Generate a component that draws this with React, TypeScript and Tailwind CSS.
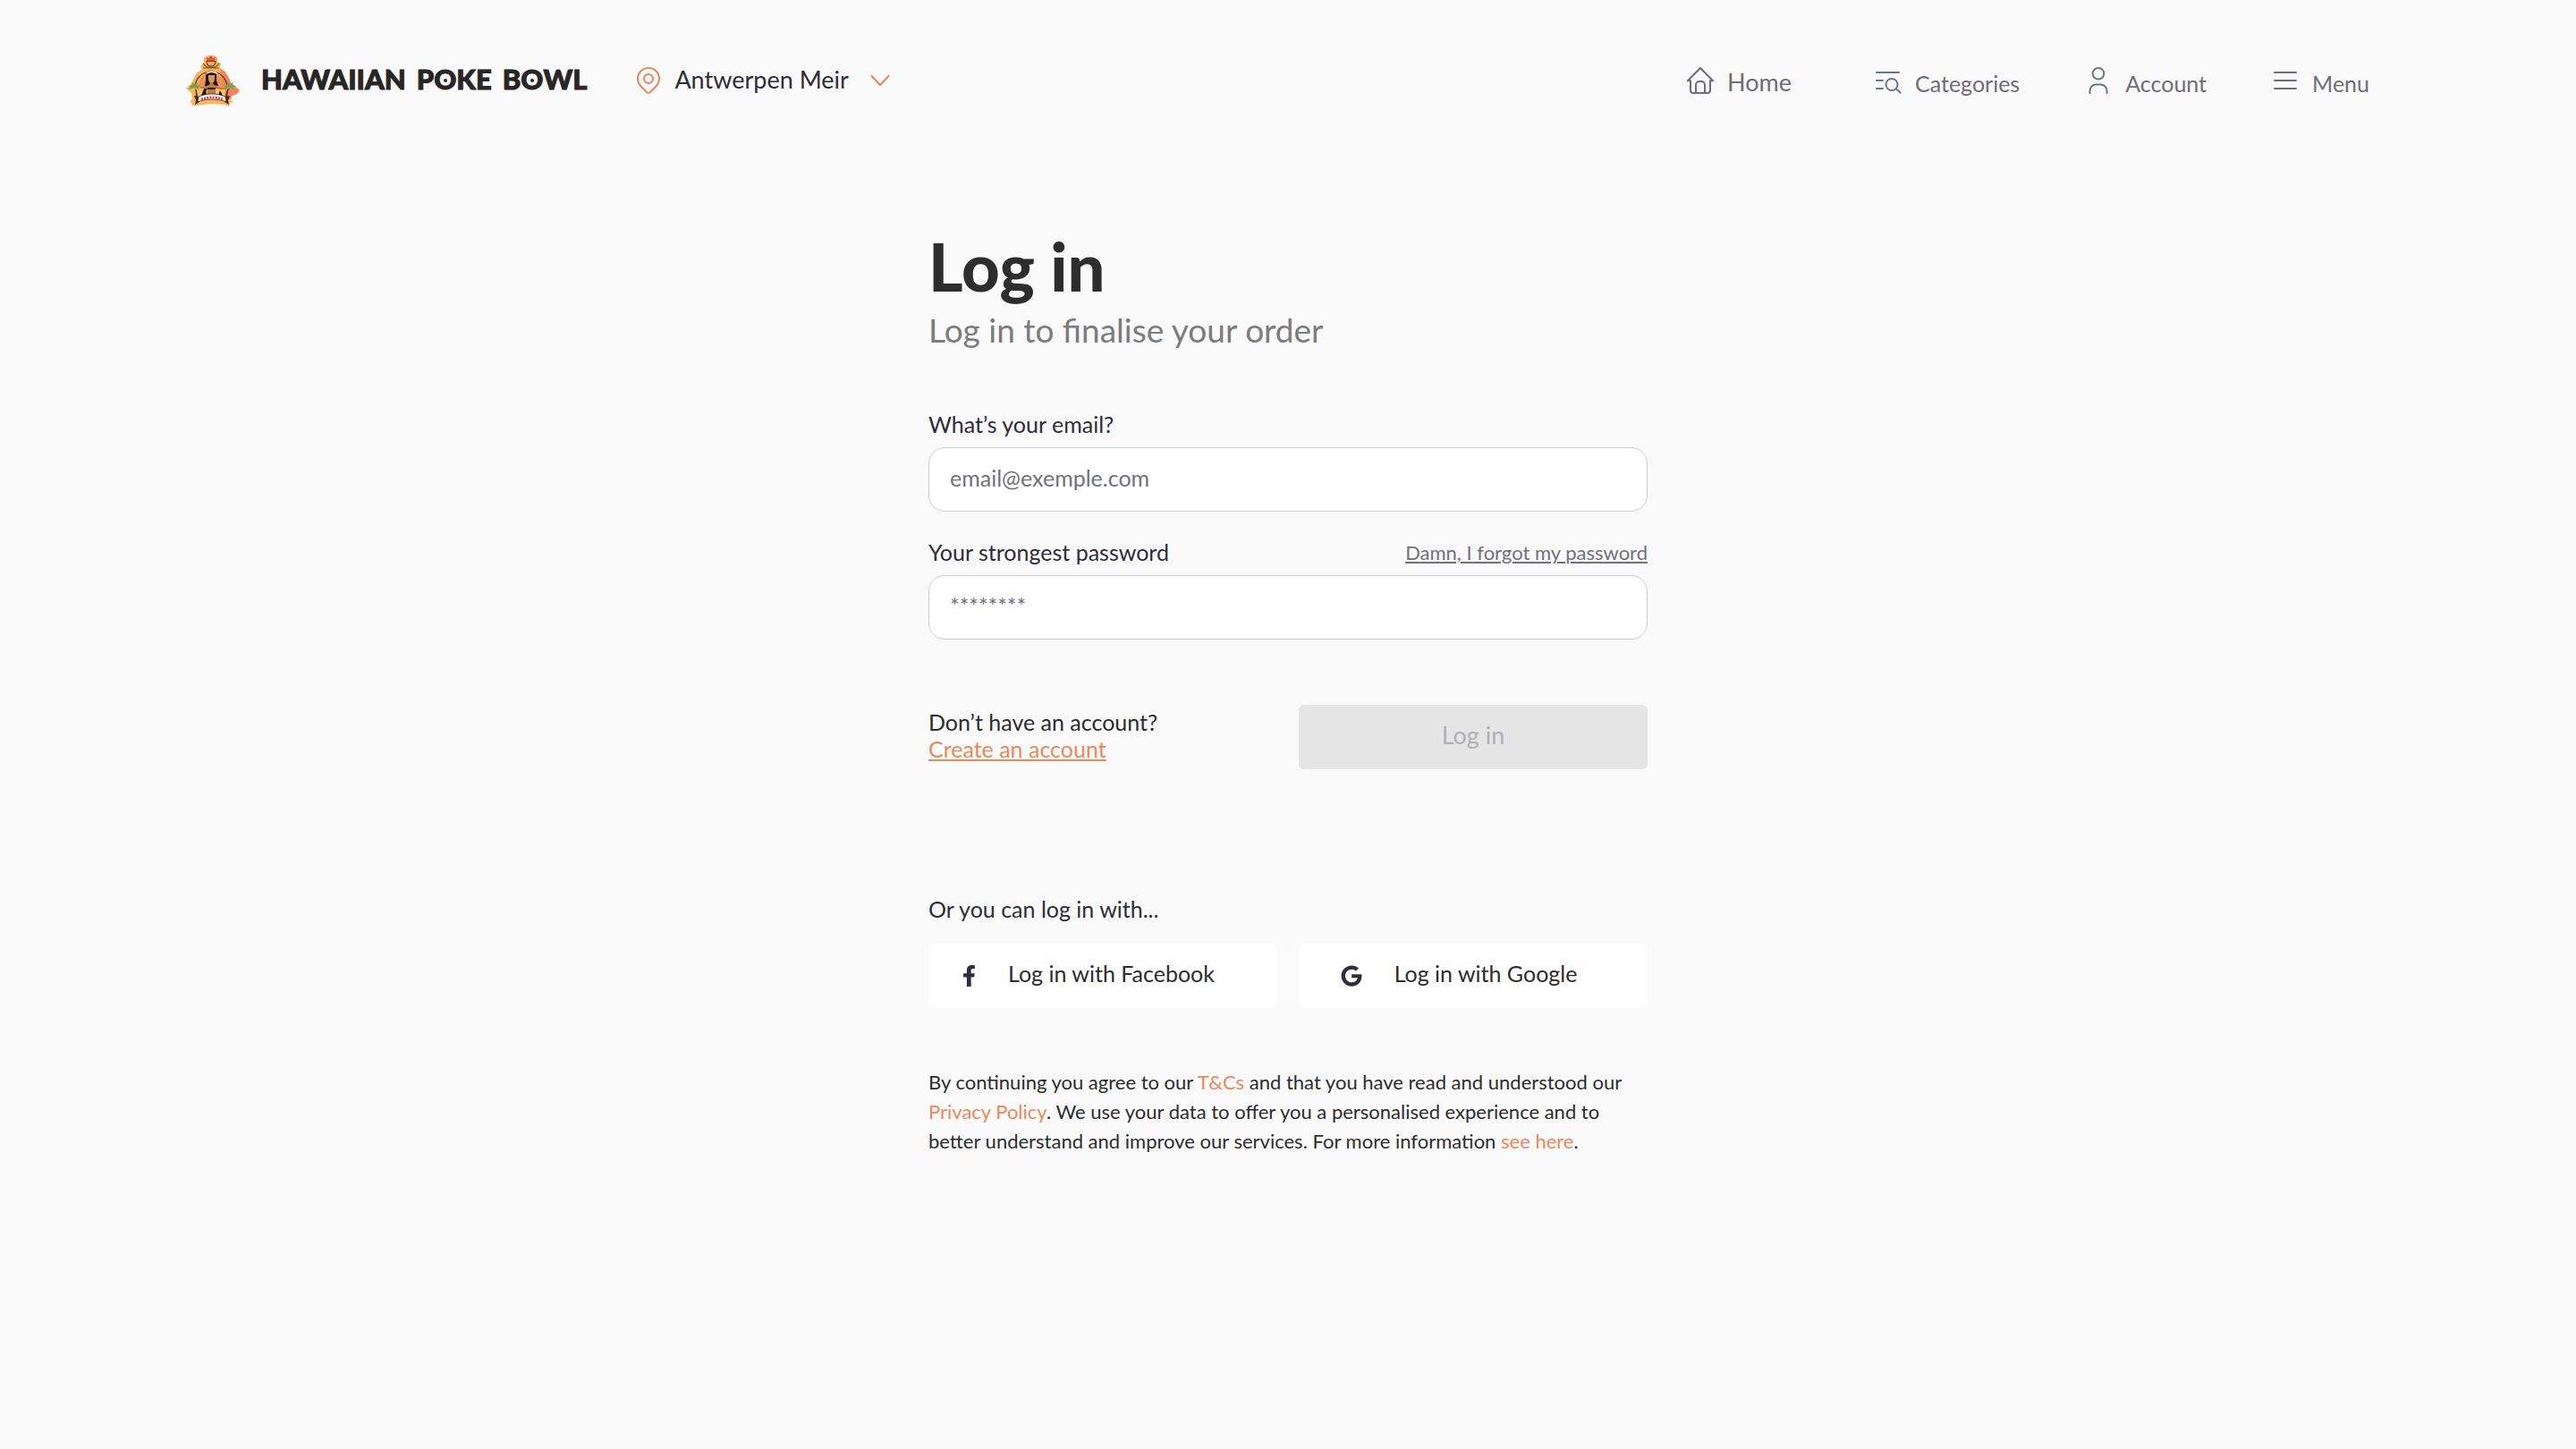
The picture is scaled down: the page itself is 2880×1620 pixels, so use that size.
import React from 'react';
import type { ReactNode } from 'react';
import { FaFacebookF, FaGoogle } from 'react-icons/fa';

function Emblem() {
  return (
    <svg viewBox="0 0 60 58" className="h-[58px] w-[60px] shrink-0" aria-hidden="true">
      {/* silhouette */}
      <path
        d="M20 3L25 1 31 1 35 3 35 8 39 10 38 15 44 19 48 26 50 31 54 35 60 40 57 44 51 46 50 51 53 53 49 54 48 58 43 56 28 55 12 57 7 57 5 52 7 50 6 43 0 38 5 34 8 28 12 20 18 17 16 13 20 9z"
        fill="#f6b660"
      />
      <path d="M38 16L44 20 48 27 50 32 55 36 60 40 57 44 51 46 50 50 46 50 43 42z" fill="#ee8463" />
      {/* sun disc */}
      <path d="M12 42a16 22 0 0 1 32 0l-1 7H13z" fill="#ef8f5c" />
      <path d="M12 38h32l-1 10H13z" fill="#f8c069" />
      <path d="M10 37a18 18 0 0 1 36 0" fill="none" stroke="#6b3a1b" strokeWidth="1.200" />
      {/* bowl */}
      <path d="M23 7l0-4 2 1 3-3 2 3 3-1-1 4z" fill="#e8503c" />
      <path d="M23 7.500h10c0 4-2 5.500-5 5.500s-5-1.500-5-5.500z" fill="#eeb05a" stroke="#6b3a1b" strokeWidth="1.100" />
      <path d="M19 10l4 4h10l4-4M19 15h18" fill="none" stroke="#8a4f22" strokeWidth="1.100" />
      {/* dancer */}
      <path d="M22 23c0-7 12-7 12 0l0 6 2 6-6-1-4 0-3 6-6 6 4-10 1-7z" fill="#17110f" />
      <path d="M25 23h7v4c0 3-1.500 5-3.500 5S25 30 25 27z" fill="#d9965f" />
      <path d="M22.500 21c3-2.500 9-2.500 12 0" fill="none" stroke="#f7cda6" strokeWidth="2.200" />
      <circle cx="22.500" cy="21.500" r="1.200" fill="#e44b4b" />
      <path d="M27 31h3l1 3 8 3 6 0v2l-8 0-4-1v6h-9v-6l-7 0-3-2 5 0 7-2z" fill="#c07a48" />
      <path d="M24 37h9v2h-9z" fill="#3b2013" />
      <path d="M16 47l6-8 1 7zM38 40l3 6h-5z" fill="#17110f" />
      {/* palms */}
      <path d="M10 38c1 4 1 7 1 11h2c0-5-1-8-2-11zM48 38c-1 4-2 7-2 11h-2c0-5 1-8 3-11z" fill="#5a3217" />
      <path d="M10 37l-7 2 2-3-3-1 5-1-1-3 4 2 3-2-1 3 5 1-4 1 2 4-4-3-1 4z" fill="#7f9f45" />
      <path d="M48 37l-6 2 2-3-3-2h5v-4l3 3 4-2-1 3 5 2h-5l2 4-4-3-2 3z" fill="#7f9f45" />
      {/* banner */}
      <path d="M9 46l6 1v6l-5 3 1-5zM49 46l-6 1v6l5 3-1-5z" fill="#4a2615" />
      <path d="M14 47c9-4 21-4 30 0l1 6c-9-4-23-4-32 0z" fill="#fff3ea" stroke="#4a2615" strokeWidth="0.800" />
      <path d="M17 50.200c8-3 16-3 24.500 0" fill="none" stroke="#d8395a" strokeWidth="2.600" strokeDasharray="2 1.200" />
    </svg>
  );
}

function DottedO() {
  return (
    <span className="relative">
      O
      <span className="absolute top-1/2 left-1/2 size-1 -translate-x-1/2 rounded-full bg-[#282624]" />
    </span>
  );
}

function Stroke({ className, box, children }: { className: string; box: string; children: ReactNode }) {
  return (
    <svg
      viewBox={box}
      className={`shrink-0 ${className}`}
      fill="none"
      stroke="currentColor"
      strokeWidth="2"
      strokeLinecap="round"
      strokeLinejoin="round"
      aria-hidden="true"
    >
      {children}
    </svg>
  );
}

function Header() {
  return (
    <header className="flex h-[180px] items-center justify-between pr-[231px] pl-52">
      <div className="flex items-center">
        <a href="#" className="flex items-center gap-6">
          <Emblem />
          <span className="flex gap-3 pb-1 text-[31px] leading-9 font-black text-[#282624] [-webkit-text-stroke:1px_#282624]">
            <span>HAWAIIAN</span>
            <span>P<DottedO />KE</span>
            <span>B<DottedO />WL</span>
          </span>
        </a>
        <button type="button" className="ml-14 flex items-center text-[#2f2d3a]">
          <Stroke box="0 0 26 30" className="h-[30px] w-[26px] text-[#e8875b]">
            <path d="M13 1a12 12 0 0 0-12 12c0 4 1.500 6.500 4 9l6 6a2.800 2.800 0 0 0 4 0l6-6c2.500-2.500 4-5 4-9A12 12 0 0 0 13 1z" />
            <circle cx="13" cy="13" r="5" />
          </Stroke>
          <span className="ml-4 pb-0.5 text-[27px] leading-8">Antwerpen Meir</span>
          <Stroke box="0 0 22 12" className="ml-6 h-3 w-[22px] text-[#e8875b]">
            <path d="M1.500 1l9.500 10L20.500 1" />
          </Stroke>
        </button>
      </div>

      <nav className="flex items-center gap-[72px] text-[25px] leading-8 text-[#6f6e77]">
        <a href="#" className="mr-5 flex items-center gap-3.5 text-[27px]">
          <Stroke box="-1 -1 32 32" className="size-8">
            <path d="M1 15.300L15 1l14 14.300M1 15.300h3V26a3 3 0 0 0 3 3h16a3 3 0 0 0 3-3V15.300h3" />
            <path d="M10 29v-9a4 4 0 0 1 4-4h2a4 4 0 0 1 4 4v9" />
          </Stroke>
          <span className="pt-1">Home</span>
        </a>
        <a href="#" className="flex items-center gap-3.5">
          <Stroke box="0 0 32 32" className="size-8 text-[#667888]">
            <path d="M3 7h25M3 16h7M3 25h7M25 25.500l4.500 4" />
            <circle cx="20" cy="20.500" r="6.500" />
          </Stroke>
          <span className="pt-1.5">Categories</span>
        </a>
        <a href="#" className="flex items-center gap-3.5">
          <Stroke box="0 0 32 32" className="size-8 text-[#667888]">
            <circle cx="16" cy="8.300" r="6.300" />
            <path d="M6.500 30v-2.500a7 7 0 0 1 7-7h5a7 7 0 0 1 7 7V30" />
          </Stroke>
          <span className="pt-1.5">Account</span>
        </a>
        <button type="button" className="flex items-center gap-3.5">
          <Stroke box="0 0 32 32" className="size-8">
            <path d="M4 7h24M4 16h24M4 25h24" />
          </Stroke>
          <span className="pt-1.5">Menu</span>
        </button>
      </nav>
    </header>
  );
}

const inputClass =
  'mt-[11px] block h-[72px] w-full rounded-[18px] border border-[#cccccc] bg-white px-[23px] pb-1 text-[25px] text-[#2f2d3a] outline-none placeholder:text-[#72717a]';

const socialClass =
  'flex h-[72px] items-center justify-center gap-9 rounded-md bg-white pr-8 text-[#2d2d2d]';

export default function App() {
  return (
    <div className="min-h-screen bg-[#fafafa] font-['Lato',sans-serif]">
      <Header />
      <main className="mx-auto max-w-[804px] pt-[78px] text-[25px] leading-[30px] text-[#2d2d2d]">
        <h1 className="text-[74px] leading-[80px] font-black">Log in</h1>
        <p className="mt-2 text-[37px] leading-[46px] text-[#7c7c7c]">Log in to finalise your order</p>

        <form className="mt-[67px]">
          <label htmlFor="email" className="block text-[#2f2d3a]">What’s your email?</label>
          <input id="email" type="email" placeholder="email@exemple.com" className={inputClass} />

          <div className="mt-[30px] flex items-center justify-between">
            <label htmlFor="password" className="text-[#2f2d3a]">Your strongest password</label>
            <a href="#" className="pt-0.5 text-[22px] leading-7 text-[#72717a] underline">Damn, I forgot my password</a>
          </div>
          <input id="password" type="password" placeholder="********" className={inputClass} />

          <div className="mt-[73px] grid grid-cols-2 gap-6">
            <div className="pt-1">
              <p>Don’t have an account?</p>
              <a href="#" className="block w-fit text-[#f0875a] underline">Create an account</a>
            </div>
            <button type="submit" disabled className="h-[72px] rounded-md bg-[#e5e5e5] pb-1 text-[27px] text-[#b0b0b4]">
              Log in
            </button>
          </div>
        </form>

        <p className="mt-[141px] text-[#2f2d3a]">Or you can log in with...</p>
        <div className="mt-6 grid grid-cols-2 gap-6">
          <button type="button" className={socialClass}>
            <FaFacebookF className="h-6 w-[15px] text-[#2f2d3f]" />
            <span className="pb-1.5">Log in with Facebook</span>
          </button>
          <button type="button" className={socialClass}>
            <FaGoogle className="size-6 text-[#2f2d3f]" />
            <span className="pb-1.5">Log in with Google</span>
          </button>
        </div>

        <p className="mt-[66px] text-[22px] leading-[33px]">
          By continuing you agree to our <a href="#" className="text-[#f0875a]">T&amp;Cs</a> and that you have read and
          understood our <a href="#" className="text-[#f0875a]">Privacy Policy</a>. We use your data to offer you a
          personalised experience and to better understand and improve our services. For more information{' '}
          <a href="#" className="text-[#f0875a]">see here</a>.
        </p>
      </main>
    </div>
  );
}
